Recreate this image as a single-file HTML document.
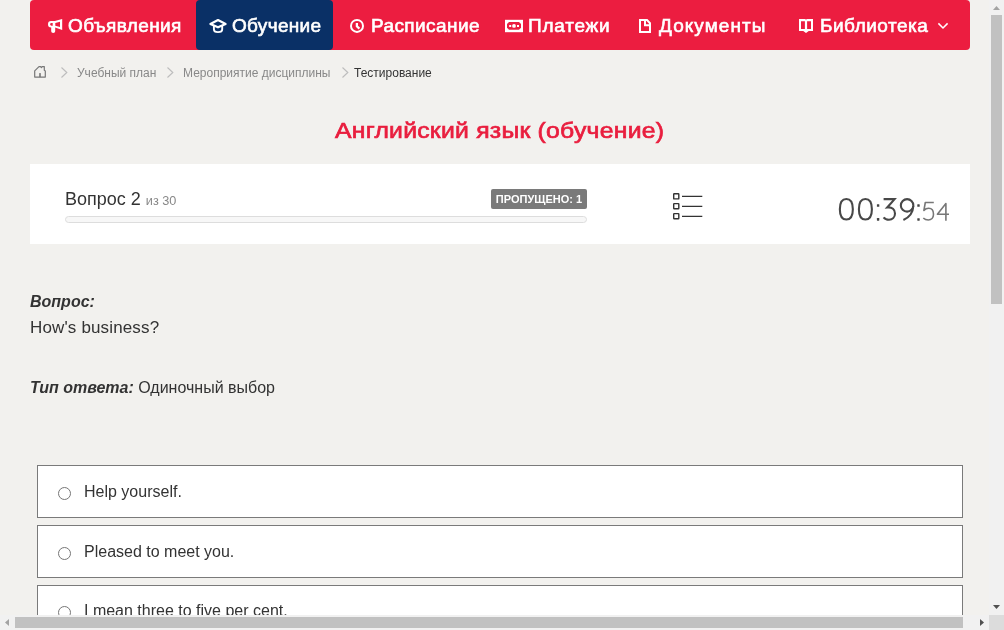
<!DOCTYPE html>
<html><head><meta charset="utf-8">
<style>
html,body{margin:0;padding:0;width:1004px;height:630px;overflow:hidden;background:#f2f1ee;font-family:"Liberation Sans",sans-serif;color:#333;}
.a{position:absolute;white-space:nowrap;}
.t{will-change:transform;}
#nav{position:absolute;left:30px;top:0;width:940px;height:50px;background:#ec1d40;border-radius:4px;}
#act{position:absolute;left:166px;top:0;width:137px;height:50px;background:#0a3066;border-radius:4px;}
.nt{position:absolute;top:1px;height:50px;line-height:50px;color:#fff;font-weight:normal;-webkit-text-stroke:0.62px #fff;font-size:19px;white-space:nowrap;will-change:transform;}
svg{position:absolute;overflow:visible;}
.bc{position:absolute;top:66px;will-change:transform;font-size:12px;line-height:14px;color:#888;white-space:nowrap;}
#title{will-change:transform;position:absolute;left:335px;top:116.5px;font-size:22.5px;font-weight:normal;-webkit-text-stroke:0.7px #e91e3e;letter-spacing:0.22px;color:#e91e3e;line-height:28px;white-space:nowrap;transform:scaleX(1.1);transform-origin:0 0;}
#card{position:absolute;left:30px;top:164px;width:940px;height:80px;background:#fff;}
.opt{position:absolute;left:37px;width:924px;height:51px;border:1px solid #7a7a7a;background:#fff;}
.radio{position:absolute;left:20px;top:21px;width:11px;height:11px;border:1px solid #767676;border-radius:50%;background:#fff;}
.ot{will-change:transform;position:absolute;left:45.5px;top:0;line-height:51px;font-size:16px;color:#333;white-space:nowrap;}
</style></head><body>

<div id="nav">
  <div id="act"></div>
</div>

<!-- nav icons -->
<svg style="left:0;top:0" width="1004" height="50">
  <!-- megaphone -->
  <path fill="#fff" fill-rule="evenodd" d="M54.8,21 L62.2,18.9 L62.2,29.9 L55.2,27.6 L55.2,31.3 Q55.2,33 53.2,33 Q51.2,33 51.2,31.3 L51.2,27.6 L51,27.6 Q48,27.6 48,24.3 Q48,21 51,21 Z M52.7,22.9 L52.7,25.7 L51.5,25.7 Q50.1,25.7 50.1,24.3 Q50.1,22.9 51.5,22.9 Z M55.3,22.9 L60,21.7 L60,26.9 L55.3,25.7 Z"/>
  <!-- cap -->
  <g fill="none" stroke="#fff" stroke-width="1.9" stroke-linejoin="round">
    <path d="M218,20 L225.6,24 L218,27.3 L210.4,24 Z" stroke-width="2.2"/>
    <path d="M213.9,25.8 V29.2 Q213.9,32.1 218,32.1 Q222.2,32.1 222.2,29.2 V25.8"/>
  </g>
  <!-- clock -->
  <g fill="none" stroke="#fff" stroke-width="2">
    <circle cx="357" cy="25.9" r="6"/>
    <path d="M356.9,22.9 V26.3 L359.4,28.6" stroke-width="2.3"/>
  </g>
  <!-- money -->
  <rect x="505" y="19.8" width="18" height="12.4" fill="#fff"/>
  <path d="M509,22 H519 L521,24 V27.7 L519,29.7 H509 L507,27.7 V24 Z" fill="#ec1d40"/>
  <circle cx="514" cy="25.9" r="1.9" fill="#fff"/>
  <rect x="509.2" y="25" width="2" height="2" fill="#fff"/>
  <rect x="517" y="25" width="2" height="2" fill="#fff"/>
  <!-- file -->
  <g fill="none" stroke="#fff" stroke-width="2" stroke-linejoin="miter">
    <path d="M640,20 H647 L650,23.2 V32 H640 Z"/>
    <path d="M645,20 V25.2 H650"/>
  </g>
  <!-- book -->
  <path fill="#fff" fill-rule="evenodd" d="M799,19 H805.2 L806,19.8 L806.8,19 H813 V31 H808.8 L806,33 L803.2,31 H799 Z M801,21.2 H804.9 V28.9 H801 Z M807.1,21.2 H811 V28.9 H807.1 Z"/>
  <!-- chevron -->
  <path d="M938.4,23.4 L943,28 L947.6,23.4" fill="none" stroke="#fff" stroke-width="1.5"/>
</svg>

<div class="nt" style="left:68.00px;letter-spacing:0.378px">Объявления</div>
<div class="nt" style="left:231.50px;letter-spacing:0.314px">Обучение</div>
<div class="nt" style="left:370.50px;letter-spacing:0.422px">Расписание</div>
<div class="nt" style="left:528.00px;letter-spacing:0.767px">Платежи</div>
<div class="nt" style="left:659.00px;letter-spacing:1.050px">Документы</div>
<div class="nt" style="left:819.50px;letter-spacing:0.511px">Библиотека</div>

<!-- breadcrumb -->
<svg style="left:0;top:0" width="500" height="90">
  <path d="M34.7,77.1 V70.9 L39,66.6 H40.6 L41.4,67.5 L42.2,66.6 H44.3 V70.3 L45.3,71 V77.1 Z" fill="none" stroke="#777" stroke-width="1.2" stroke-linejoin="round"/>
  <rect x="39.2" y="73.1" width="1.6" height="4" fill="#777"/>
  <g fill="none" stroke="#bdbdbd" stroke-width="1.15">
    <path d="M61.5,67.5 L66.8,72.5 L61.5,77.5"/>
    <path d="M167.5,67.5 L172.8,72.5 L167.5,77.5"/>
    <path d="M342.5,67.5 L347.8,72.5 L342.5,77.5"/>
  </g>
</svg>
<div class="bc" style="left:77px">Учебный план</div>
<div class="bc" style="left:183px">Мероприятие дисциплины</div>
<div class="bc" style="left:353.5px;color:#333">Тестирование</div>

<div id="title">Английский язык (обучение)</div>

<div id="card"></div>
<div class="a t" style="left:65px;top:188.3px;font-size:18px;line-height:22px;color:#333">Вопрос 2 <span style="font-size:12.7px;color:#888">из 30</span></div>
<div class="a t" style="left:65px;top:216px;width:520px;height:4.5px;border:1px solid #dddddd;border-radius:4px;background:#f7f7f7"></div>
<div class="a" style="left:491px;top:189px;width:96px;height:20px;background:#7a7a7a;border-radius:2px"></div>
<div class="a t" style="left:491px;top:189px;width:96px;height:20px;color:#fff;font-size:11px;font-weight:bold;line-height:20px;text-align:center">ПРОПУЩЕНО: 1</div>

<!-- list icon -->
<svg style="left:0;top:0" width="1004" height="250">
  <g fill="none" stroke="#333" stroke-width="1.4">
    <rect x="673.7" y="193.7" width="5.1" height="5.2" rx="0.5"/>
    <rect x="673.7" y="203.6" width="5.1" height="5.2" rx="0.5"/>
    <rect x="673.7" y="213.6" width="5.1" height="5.2" rx="0.5"/>
    <path d="M682,196.3 H702.3 M682,206.3 H702.3 M682,216.3 H702.3" stroke-width="1.3"/>
  </g>
</svg>
<svg style="left:0;top:0" width="1004" height="250">
  <g fill="none" stroke="#484848" stroke-width="2.1" stroke-linecap="butt" stroke-linejoin="miter">
    <path d="M846.35,198.95 C850.38,198.95 852.85,202.86 852.85,209.25 C852.85,215.64 850.38,219.55 846.35,219.55 C842.32,219.55 839.85,215.64 839.85,209.25 C839.85,202.86 842.32,198.95 846.35,198.95 Z"/>
    <path d="M865.40,198.95 C869.43,198.95 871.90,202.86 871.90,209.25 C871.90,215.64 869.43,219.55 865.40,219.55 C861.37,219.55 858.90,215.64 858.90,209.25 C858.90,202.86 861.37,198.95 865.40,198.95 Z"/>
    <path d="M883.6,199.1 H894.6 L887.2,207.5 C892.2,206.9 895,209.6 895,213.5 C895,217.3 892.3,219.7 889,219.7 C886.6,219.7 884.6,218.6 883.6,217.3"/>
    <circle cx="907.1" cy="205.4" r="6.25"/>
    <path d="M913.3,206 C913,212.5 908.8,217.6 903.4,220"/>
  </g>
  <g fill="#444">
    <rect x="876.9" y="204.2" width="2.4" height="2.6" rx="0.4"/>
    <rect x="876.9" y="218.1" width="2.4" height="2.6" rx="0.4"/>
    <rect x="917.3" y="204.3" width="2.4" height="2.5" rx="0.4"/>
    <rect x="917.3" y="218.2" width="2.4" height="2.5" rx="0.4"/>
  </g>
  <g fill="none" stroke="#777" stroke-width="1.6" stroke-linejoin="round">
    <path d="M933.8,202.5 H925.3 L923.9,210.4 C925.2,209 927,208.3 928.7,208.3 C931.7,208.3 933.5,210.8 933.5,214.3 C933.5,217.8 931.3,220 928.3,220 C926.3,220 924.5,219.2 923.3,218"/>
    <path d="M945.9,220.8 V203.6 L937.4,214.2 H949"/>
  </g>
</svg>

<div class="a t" style="left:30px;top:292px;font-size:16px;line-height:20px;font-weight:bold;font-style:italic;color:#333">Вопрос:</div>
<div class="a t" style="left:30px;top:318.3px;font-size:17px;line-height:20px;letter-spacing:0.15px;color:#333">How's business?</div>
<div class="a t" style="left:30px;top:378px;font-size:16px;line-height:20px;color:#333"><b><i>Тип ответа:</i></b> Одиночный выбор</div>

<div class="opt" style="top:465px"><div class="radio"></div><div class="ot">Help yourself.</div></div>
<div class="opt" style="top:525px"><div class="radio"></div><div class="ot">Pleased to meet you.</div></div>
<div class="opt" style="top:585px"><div class="radio" style="top:20px"></div><div class="ot" style="top:-1px">I mean three to five per cent.</div></div>

<!-- scrollbars -->
<div class="a t" style="left:989px;top:0;width:15px;height:615px;background:#f1f1f1"></div>
<div class="a t" style="left:991px;top:15px;width:11px;height:289px;background:#c1c1c1"></div>
<div class="a t" style="left:0;top:615px;width:989px;height:15px;background:#f1f1f1"></div>
<div class="a t" style="left:15px;top:617px;width:948px;height:11px;background:#c1c1c1"></div>
<div class="a t" style="left:989px;top:615px;width:15px;height:15px;background:#dcdcdc"></div>
<svg style="left:0;top:0" width="1004" height="630">
  <path d="M993,10 L996.5,6 L1000,10 Z" fill="#a3a3a3"/>
  <path d="M993,605 L1000,605 L996.5,609 Z" fill="#505050"/>
  <path d="M9,619 L9,626 L5,622.5 Z" fill="#a3a3a3"/>
  <path d="M980,619 L980,626 L984,622.5 Z" fill="#505050"/>
</svg>
</body></html>
